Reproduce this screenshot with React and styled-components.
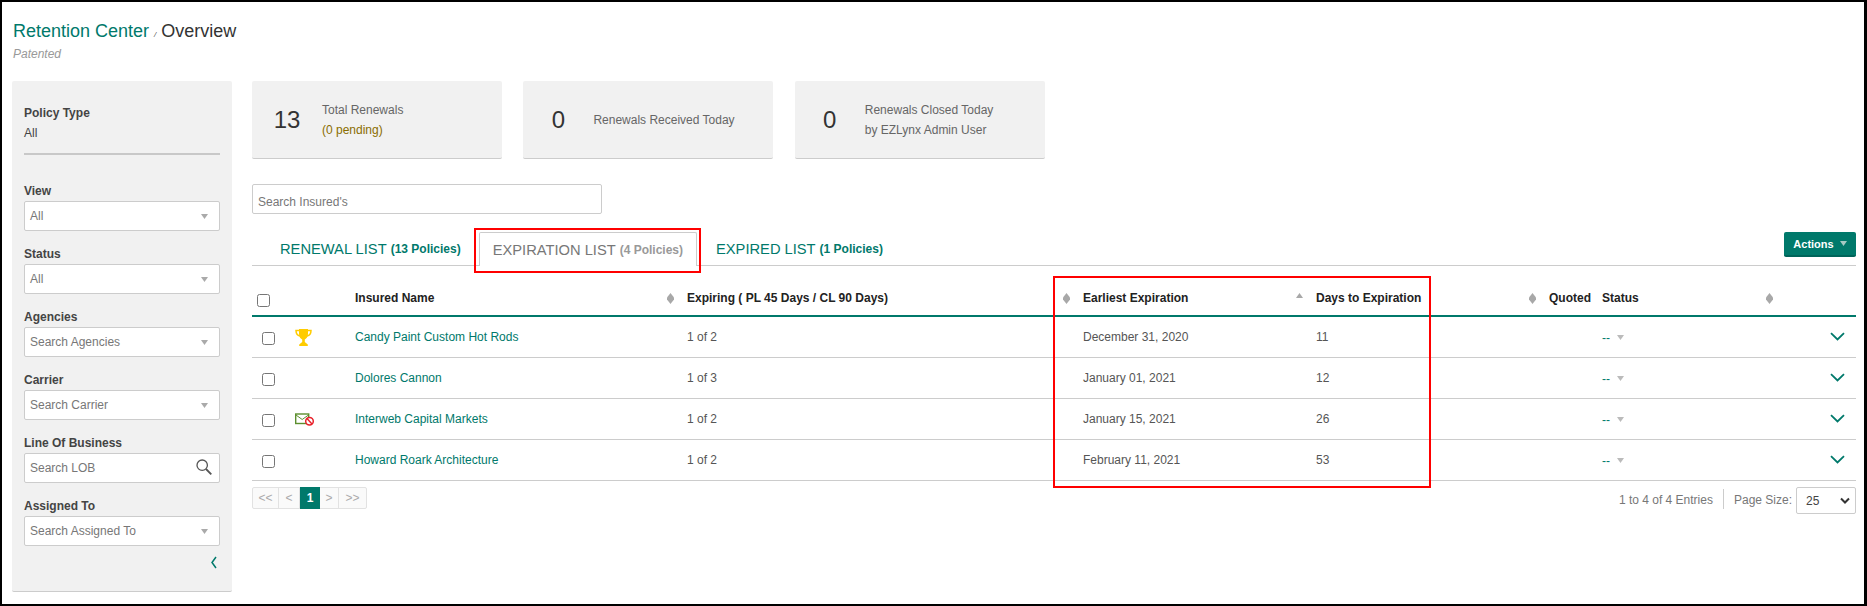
import React from "react";
import styled, { createGlobalStyle } from "styled-components";

const TEAL = "#00796b";
const FONT = `"Liberation Sans", Arial, sans-serif`;

const Global = createGlobalStyle`
  html, body { margin: 0; padding: 0; background: #fff; }
  body { font-family: ${FONT}; font-size: 12px; color: #555; }
  * { box-sizing: border-box; }
`;

const Page = styled.div`
  position: relative;
  width: 1867px;
  height: 606px;
  border-style: solid;
  border-color: #000;
  border-width: 2px 3px 2px 2px;
  padding: 0 8px 0 10px;
  overflow: hidden;
`;
const Header = styled.header`
  height: 79px;
  padding-top: 18px;
`;
const Title = styled.h1`
  margin: 0;
  font-size: 18px;
  font-weight: 400;
  line-height: 22px;
  color: #333;
  padding-left: 1px;
`;
const Crumb = styled.span`color: ${TEAL};`;
const Slash = styled.span`font-size: 8px; font-style: italic; color: #555;`;
const Sub = styled.div`
  font-size: 12px;
  font-style: italic;
  color: #999;
  line-height: 14px;
  margin-top: 1px;
  padding-left: 1px;
`;
const Body = styled.div`
  display: flex;
  gap: 20px;
`;
const Sidebar = styled.aside`
  width: 220px;
  height: 511px;
  flex: none;
  background: #f1f1f1;
  border-bottom: 1px solid #ccc;
  border-radius: 2px;
  padding: 25px 12px 0;
  display: flex;
  flex-direction: column;
`;
const Label = styled.div`
  font-size: 12px;
  font-weight: 700;
  line-height: 14px;
  color: #444;
`;
const PolicyValue = styled.div`
  font-size: 12px;
  line-height: 14px;
  color: #444;
  margin-top: 6px;
`;
const Rule = styled.hr`
  margin: 13px 0 29px;
  border: 0;
  height: 2px;
  background: #c8c8c8;
`;
const Group = styled.div`
  display: flex;
  flex-direction: column;
  gap: 3px;
  margin-bottom: 16px;
`;
const Field = styled.div`
  height: 30px;
  width: ${(p) => p.$width || "100%"};
  background: #fff;
  border: 1px solid #ccc;
  border-radius: 2px;
  padding: 0 5px;
  display: flex;
  align-items: center;
  justify-content: space-between;
  font-size: 12px;
  color: #777;
`;
const CaretSlot = styled.span`
  display: flex;
  padding-right: 6px;
`;
const LensSlot = styled.span`
  display: flex;
  padding: 0 2px 3px 0;
`;
const CollapseRow = styled.div`
  display: flex;
  justify-content: flex-end;
  padding-right: 3px;
  margin-top: -6px;
`;
const Main = styled.main`
  flex: 1;
  min-width: 0;
  display: flex;
  flex-direction: column;
`;
const Cards = styled.section`
  display: flex;
  gap: 21.4px;
`;
const Card = styled.div`
  width: 250px;
  height: 78px;
  background: #f1f1f1;
  border-bottom: 1px solid #ccc;
  border-radius: 2px;
  display: flex;
  align-items: center;
`;
const Num = styled.div`
  width: 70px;
  flex: none;
  text-align: center;
  font-size: 24px;
  color: #333;
`;
const CardText = styled.div`
  font-size: 12px;
  line-height: 20px;
  color: #666;
`;
const Pending = styled.div`color: #8a6d00;`;
const SearchBar = styled(Field)`
  margin-top: 25px;
  width: 350px;
  padding-top: 6px;
`;
const TabRow = styled.div`
  margin-top: 18px;
  height: 34px;
  border-bottom: 1px solid #ccc;
  display: flex;
  align-items: stretch;
  position: relative;
`;
const Tab = styled.div`
  display: flex;
  align-items: center;
  gap: 4px;
  font-size: 14.7px;
  color: ${(p) => (p.$active ? "#777" : TEAL)};
  margin-left: ${(p) => p.$ml}px;
  padding: 0 ${(p) => (p.$active ? "13px" : "0")};
  height: ${(p) => (p.$active ? "34px" : "33px")};
  background: #fff;
  ${(p) => p.$active && "border: 1px solid #ccc; border-bottom: 0; border-radius: 2px 2px 0 0;"}
`;
const TabCount = styled.b`
  font-size: 12px;
  color: ${(p) => (p.$active ? "#999" : TEAL)};
`;
const ActionsButton = styled.button`
  margin-left: auto;
  width: 72px;
  height: 25px;
  background: ${TEAL};
  border: 0;
  border-bottom: 2px solid #00645a;
  border-radius: 2px;
  color: #fff;
  font: 700 11px ${FONT};
  display: flex;
  align-items: center;
  justify-content: center;
  gap: 6px;
  padding: 0;
`;
const COLS = "43px 60px 332px 396px 233px 233px 53px 184px 70px";
const HeadRow = styled.div`
  display: grid;
  grid-template-columns: ${COLS};
  height: 51px;
  border-bottom: 2px solid ${TEAL};
  padding-bottom: 10px;
  align-items: end;
  font-size: 12px;
  font-weight: 700;
  color: #222;
  line-height: 14px;
`;
const HeadCell = styled.div`
  display: flex;
  justify-content: space-between;
  align-items: center;
  padding-right: ${(p) => (p.$flat ? 0 : 13)}px;
`;
const HeadCheck = styled.div`
  padding-left: 5px;
  height: 13px;
  margin-bottom: -2px;
  display: flex;
`;
const Check = styled.input.attrs({ type: "checkbox" })`
  margin: 0;
  width: 13px;
  height: 13px;
`;
const Row = styled.div`
  display: grid;
  grid-template-columns: ${COLS};
  height: 41px;
  border-bottom: 1px solid #ccc;
  align-items: center;
  font-size: 12px;
  color: #555;
`;
const CheckCell = styled.div`
  padding-left: 10px;
  display: flex;
  padding-top: 3px;
`;
const IconCell = styled.div`
  display: flex;
  align-items: center;
  height: 20px;
  margin-top: ${(p) => p.$mt || 0}px;
`;
const NameLink = styled.a`
  color: ${TEAL};
  white-space: nowrap;
`;
const Cell = styled.div``;
const StatusCell = styled.div`
  display: flex;
  align-items: center;
  gap: 7px;
  color: ${TEAL};
`;
const Dash = styled.span`
  padding-top: 2px;
`;
const ChevronCell = styled.div`
  display: flex;
  justify-content: flex-end;
  padding-right: 11px;
  padding-bottom: 1px;
`;
const Footer = styled.div`
  display: flex;
  justify-content: space-between;
  align-items: flex-start;
  margin-top: 6px;
`;
const Pager = styled.div`
  display: flex;
  height: 22px;
  border: 1px solid #e2e2e2;
  border-radius: 2px;
  background: #fafafa;
`;
const PageCell = styled.div`
  width: ${(p) => p.$w}px;
  display: flex;
  align-items: center;
  justify-content: center;
  font-size: 12px;
  color: ${(p) => (p.$active ? "#fff" : "#aaa")};
  font-weight: ${(p) => (p.$active ? 700 : 400)};
  background: ${(p) => (p.$active ? TEAL : "transparent")};
  border-right: ${(p) => (p.$active || p.$last ? "0" : "1px solid #e2e2e2")};
  margin: ${(p) => (p.$active ? "-1px 0" : "0")};
`;
const FooterRight = styled.div`
  display: flex;
  align-items: flex-start;
`;
const Entries = styled.div`
  font-size: 12px;
  line-height: 14px;
  color: #777;
  padding-top: 4px;
  padding-right: 10px;
  height: 20px;
  margin-top: 2px;
  border-right: 1px solid #ccc;
`;
const SizeLabel = styled.div`
  font-size: 12px;
  color: #777;
  line-height: 14px;
  padding: 6px 4px 0 10px;
`;
const SizeSelect = styled.div`
  width: 60px;
  height: 27px;
  border: 1px solid #ccc;
  border-radius: 2px;
  padding: 0 5px 0 9px;
  display: flex;
  align-items: center;
  justify-content: space-between;
  font-size: 12px;
  color: #444;
`;
const RedBox = styled.div`
  position: absolute;
  border: 2px solid #f00;
  pointer-events: none;
  left: ${(p) => p.$x - 2}px;
  top: ${(p) => p.$y - 2}px;
  width: ${(p) => p.$w}px;
  height: ${(p) => p.$h}px;
`;

const Caret = ({ color = "#aaa" }) => (
  <svg width="7" height="5" viewBox="0 0 7 5"><path d="M0 0h7L3.5 5z" fill={color} /></svg>
);
const Diamond = () => (
  <svg width="7" height="11" viewBox="0 0 7 11"><path d="M3.5 0L7 4.5v2L3.5 11 0 6.5v-2z" fill="#a8a8a8" /></svg>
);
const UpArrow = () => (
  <svg width="7" height="11" viewBox="0 0 7 11"><path d="M3.5 0L7 5H0z" fill="#a8a8a8" /></svg>
);
const ChevronDown = () => (
  <svg width="15" height="9" viewBox="0 0 15 9"><path d="M1 1.2L7.5 7.5 14 1.2" fill="none" stroke={TEAL} strokeWidth="1.8" /></svg>
);
const ChevronLeft = () => (
  <svg width="6" height="13" viewBox="0 0 6 13"><path d="M5 1L1 6.500 5 12" fill="none" stroke={TEAL} strokeWidth="1.500" /></svg>
);
const BlackChevron = () => (
  <svg width="10" height="7" viewBox="0 0 10 7"><path d="M1 1.5L5 5.5 9 1.5" fill="none" stroke="#333" strokeWidth="2" /></svg>
);
const Lens = () => (
  <svg width="16" height="16" viewBox="0 0 16 16">
    <circle cx="6.200" cy="6.200" r="5.200" fill="none" stroke="#555" strokeWidth="1.300" />
    <path d="M10 10l5.300 5.300" stroke="#555" strokeWidth="1.800" />
  </svg>
);
const Trophy = () => (
  <svg width="17" height="17" viewBox="0 0 17 17">
    <path d="M4 0h9v5c0 3-2 5-3.2 5.500V13l3 2.500V17H4.200v-1.500l3-2.500v-2.500C5.800 10 4 8 4 5z" fill="#fc0" />
    <path d="M4 1.500H1c0 3.500 1.500 5 4 5.500M13 1.500h3c0 3.500-1.500 5-4 5.500" fill="none" stroke="#fc0" strokeWidth="1.500" />
  </svg>
);
const NoMail = () => (
  <svg width="20" height="14" viewBox="0 0 20 14">
    <rect x="0.700" y="1" width="13" height="9.500" fill="#fff" stroke="#5c8f2e" strokeWidth="1.400" />
    <path d="M1 2l6.200 4.500L13.500 2" fill="none" stroke="#5c8f2e" strokeWidth="1" />
    <circle cx="14.500" cy="8.200" r="3.800" fill="#fff" stroke="#e8202a" strokeWidth="1.500" />
    <path d="M12 5.500l5 5.500" stroke="#e8202a" strokeWidth="1.400" />
  </svg>
);

const FILTERS = [
  ["View", "All"],
  ["Status", "All"],
  ["Agencies", "Search Agencies"],
  ["Carrier", "Search Carrier"],
  ["Line Of Business", "Search LOB", true],
  ["Assigned To", "Search Assigned To"],
];
const ROWS = [
  ["Candy Paint Custom Hot Rods", "1 of 2", "December 31, 2020", "11", "trophy"],
  ["Dolores Cannon", "1 of 3", "January 01, 2021", "12"],
  ["Interweb Capital Markets", "1 of 2", "January 15, 2021", "26", "mail"],
  ["Howard Roark Architecture", "1 of 2", "February 11, 2021", "53"],
];

export default function App() {
  return (
    <Page>
      <Global />
      <Header>
        <Title>
          <Crumb>Retention Center</Crumb> <Slash>/</Slash> Overview
        </Title>
        <Sub>Patented</Sub>
      </Header>
      <Body>
        <Sidebar>
          <Label>Policy Type</Label>
          <PolicyValue>All</PolicyValue>
          <Rule />
          {FILTERS.map(([label, value, isSearch]) => (
            <Group key={label}>
              <Label>{label}</Label>
              <Field>
                {value}
                {isSearch ? <LensSlot><Lens /></LensSlot> : <CaretSlot><Caret /></CaretSlot>}
              </Field>
            </Group>
          ))}
          <CollapseRow><ChevronLeft /></CollapseRow>
        </Sidebar>
        <Main>
          <Cards>
            <Card>
              <Num>13</Num>
              <CardText>Total Renewals<Pending>(0 pending)</Pending></CardText>
            </Card>
            <Card>
              <Num>0</Num>
              <CardText>Renewals Received Today</CardText>
            </Card>
            <Card>
              <Num>0</Num>
              <CardText>Renewals Closed Today<br />by EZLynx Admin User</CardText>
            </Card>
          </Cards>
          <SearchBar>Search Insured's</SearchBar>
          <TabRow>
            <Tab $ml={28}>RENEWAL LIST <TabCount>(13 Policies)</TabCount></Tab>
            <Tab $active $ml={18}>EXPIRATION LIST <TabCount $active>(4 Policies)</TabCount></Tab>
            <Tab $ml={19}>EXPIRED LIST <TabCount>(1 Policies)</TabCount></Tab>
            <ActionsButton>Actions <Caret color="#a5c9c3" /></ActionsButton>
          </TabRow>
          <HeadRow>
            <HeadCheck><Check /></HeadCheck>
            <div />
            <HeadCell>Insured Name <Diamond /></HeadCell>
            <HeadCell>Expiring ( PL 45 Days / CL 90 Days) <Diamond /></HeadCell>
            <HeadCell>Earliest Expiration <UpArrow /></HeadCell>
            <HeadCell>Days to Expiration <Diamond /></HeadCell>
            <HeadCell $flat>Quoted</HeadCell>
            <HeadCell>Status <Diamond /></HeadCell>
            <div />
          </HeadRow>
          {ROWS.map(([name, expiring, date, days, icon]) => (
            <Row key={name}>
              <CheckCell><Check /></CheckCell>
              <IconCell $mt={icon === "mail" ? 1 : 0}>
                {icon === "trophy" && <Trophy />}
                {icon === "mail" && <NoMail />}
              </IconCell>
              <NameLink>{name}</NameLink>
              <Cell>{expiring}</Cell>
              <Cell>{date}</Cell>
              <Cell>{days}</Cell>
              <div />
              <StatusCell><Dash>--</Dash> <Caret color="#bbb" /></StatusCell>
              <ChevronCell><ChevronDown /></ChevronCell>
            </Row>
          ))}
          <Footer>
            <Pager>
              <PageCell $w={26}>&lt;&lt;</PageCell>
              <PageCell $w={21}>&lt;</PageCell>
              <PageCell $w={20} $active>1</PageCell>
              <PageCell $w={19}>&gt;</PageCell>
              <PageCell $w={27} $last>&gt;&gt;</PageCell>
            </Pager>
            <FooterRight>
              <Entries>1 to 4 of 4 Entries</Entries>
              <SizeLabel>Page Size:</SizeLabel>
              <SizeSelect>25 <BlackChevron /></SizeSelect>
            </FooterRight>
          </Footer>
        </Main>
      </Body>
      <RedBox $x={474} $y={228} $w={227} $h={45} />
      <RedBox $x={1053} $y={276} $w={378} $h={212} />
    </Page>
  );
}
